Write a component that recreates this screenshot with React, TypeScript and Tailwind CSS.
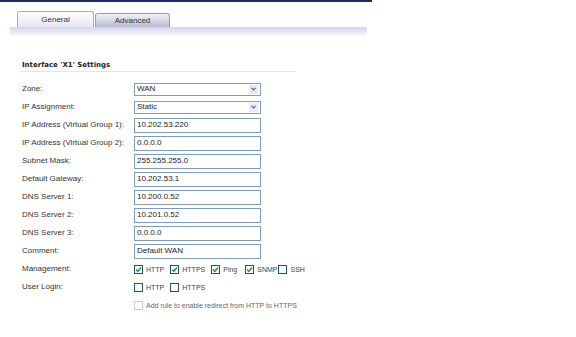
import React from "react";

const font = { fontFamily: '"Liberation Sans", Arial, sans-serif' };

function Check({ checked, disabled }: { checked?: boolean; disabled?: boolean }) {
  return (
    <span
      className={
        "inline-flex w-[9px] h-[9px] items-center justify-center border bg-white shrink-0 " +
        (disabled ? "border-[#c8ccd4]" : "border-[#1c5180]")
      }
    >
      {checked && (
        <svg width="7" height="7" viewBox="0 0 7 7">
          <path d="M1 3.5 L2.8 5.3 L6 1.5" stroke="#21a121" strokeWidth="1.5" fill="none" />
        </svg>
      )}
    </span>
  );
}

function Select({ value }: { value: string }) {
  return (
    <div className="w-[127px] h-[13px] border border-[#7f9db9] bg-white flex items-center justify-between pl-[2px] pr-[2px]">
      <span className="text-[8px] leading-none text-[#222]">{value}</span>
      <span className="w-[9px] h-[9px] bg-[#e4ebf8] flex items-center justify-center">
        <svg width="5" height="4" viewBox="0 0 5 4">
          <path d="M0.5 0.8 L2.5 2.8 L4.5 0.8" stroke="#4d6185" strokeWidth="1.2" fill="none" />
        </svg>
      </span>
    </div>
  );
}

function Input({ value }: { value: string }) {
  return (
    <div className="w-[127px] h-[15px] border border-[#7f9db9] bg-white flex items-center pl-[2px]">
      <span className="text-[8px] leading-none text-[#222]">{value}</span>
    </div>
  );
}

function Row({ label, children }: { label: string; children: React.ReactNode }) {
  return (
    <div className="flex items-center h-[18px]">
      <div className="w-[112px] text-[8px] leading-none text-[#333]">{label}</div>
      <div className="flex items-center">{children}</div>
    </div>
  );
}

function Opt({
  label,
  checked,
  disabled,
  gap = "mr-[6px]",
}: {
  label: string;
  checked?: boolean;
  disabled?: boolean;
  gap?: string;
}) {
  return (
    <span className={"flex items-center gap-[3px] " + gap}>
      <Check checked={checked} disabled={disabled} />
      <span className={"text-[7px] leading-none " + (disabled ? "text-[#666]" : "text-[#444]")}>{label}</span>
    </span>
  );
}

export default function App() {
  const inputs: [string, string][] = [
    ["IP Address (Virtual Group 1):", "10.202.53.220"],
    ["IP Address (Virtual Group 2):", "0.0.0.0"],
    ["Subnet Mask:", "255.255.255.0"],
    ["Default Gateway:", "10.202.53.1"],
    ["DNS Server 1:", "10.200.0.52"],
    ["DNS Server 2:", "10.201.0.52"],
    ["DNS Server 3:", "0.0.0.0"],
    ["Comment:", "Default WAN"],
  ];

  return (
    <div className="w-[576px] h-[337px] bg-white overflow-hidden" style={font}>
      <div className="w-[372px] h-[2px] bg-[#1c2a5e]" />

      <div className="mt-[9px] pl-[17px] flex items-end h-[16px]">
        <div className="w-[77px] h-[16px] rounded-t-[3px] border border-b-0 border-[#a9aabb] bg-gradient-to-b from-white to-[#e6e6f4] flex items-center justify-center text-[8px] text-[#333]">
          General
        </div>
        <div className="ml-[1px] w-[75px] h-[14px] rounded-t-[3px] border border-b-0 border-[#9c9cae] bg-gradient-to-b from-[#f2f2f6] to-[#b9b9d2] flex items-center justify-center text-[8px] text-[#333]">
          Advanced
        </div>
      </div>

      <div className="ml-[10px] w-[357px] h-[10px] bg-gradient-to-b from-[#d3d3ec] to-white" />

      <div className="pl-[20px]">
        <div className="mt-[24px] w-[276px] h-[11px] border-b border-[#dfe5ee] pl-[2px] text-[7px] font-bold leading-[9px] text-[#222]" style={{ fontFamily: '"DejaVu Sans", Verdana, sans-serif' }}>
          Interface 'X1' Settings
        </div>

        <div className="mt-[8px] pl-[2px]">
          <Row label="Zone:">
            <Select value="WAN" />
          </Row>
          <Row label="IP Assignment:">
            <Select value="Static" />
          </Row>
          {inputs.map(([l, v]) => (
            <Row key={l} label={l}>
              <Input value={v} />
            </Row>
          ))}
          <Row label="Management:">
            <Opt label="HTTP" checked />
            <Opt label="HTTPS" checked />
            <Opt label="Ping" checked gap="mr-[8px]" />
            <Opt label="SNMP" checked gap="mr-[1px]" />
            <Opt label="SSH" />
          </Row>
          <Row label="User Login:">
            <Opt label="HTTP" />
            <Opt label="HTTPS" />
          </Row>
          <Row label="">
            <Opt label="Add rule to enable redirect from HTTP to HTTPS" disabled />
          </Row>
        </div>
      </div>
    </div>
  );
}
